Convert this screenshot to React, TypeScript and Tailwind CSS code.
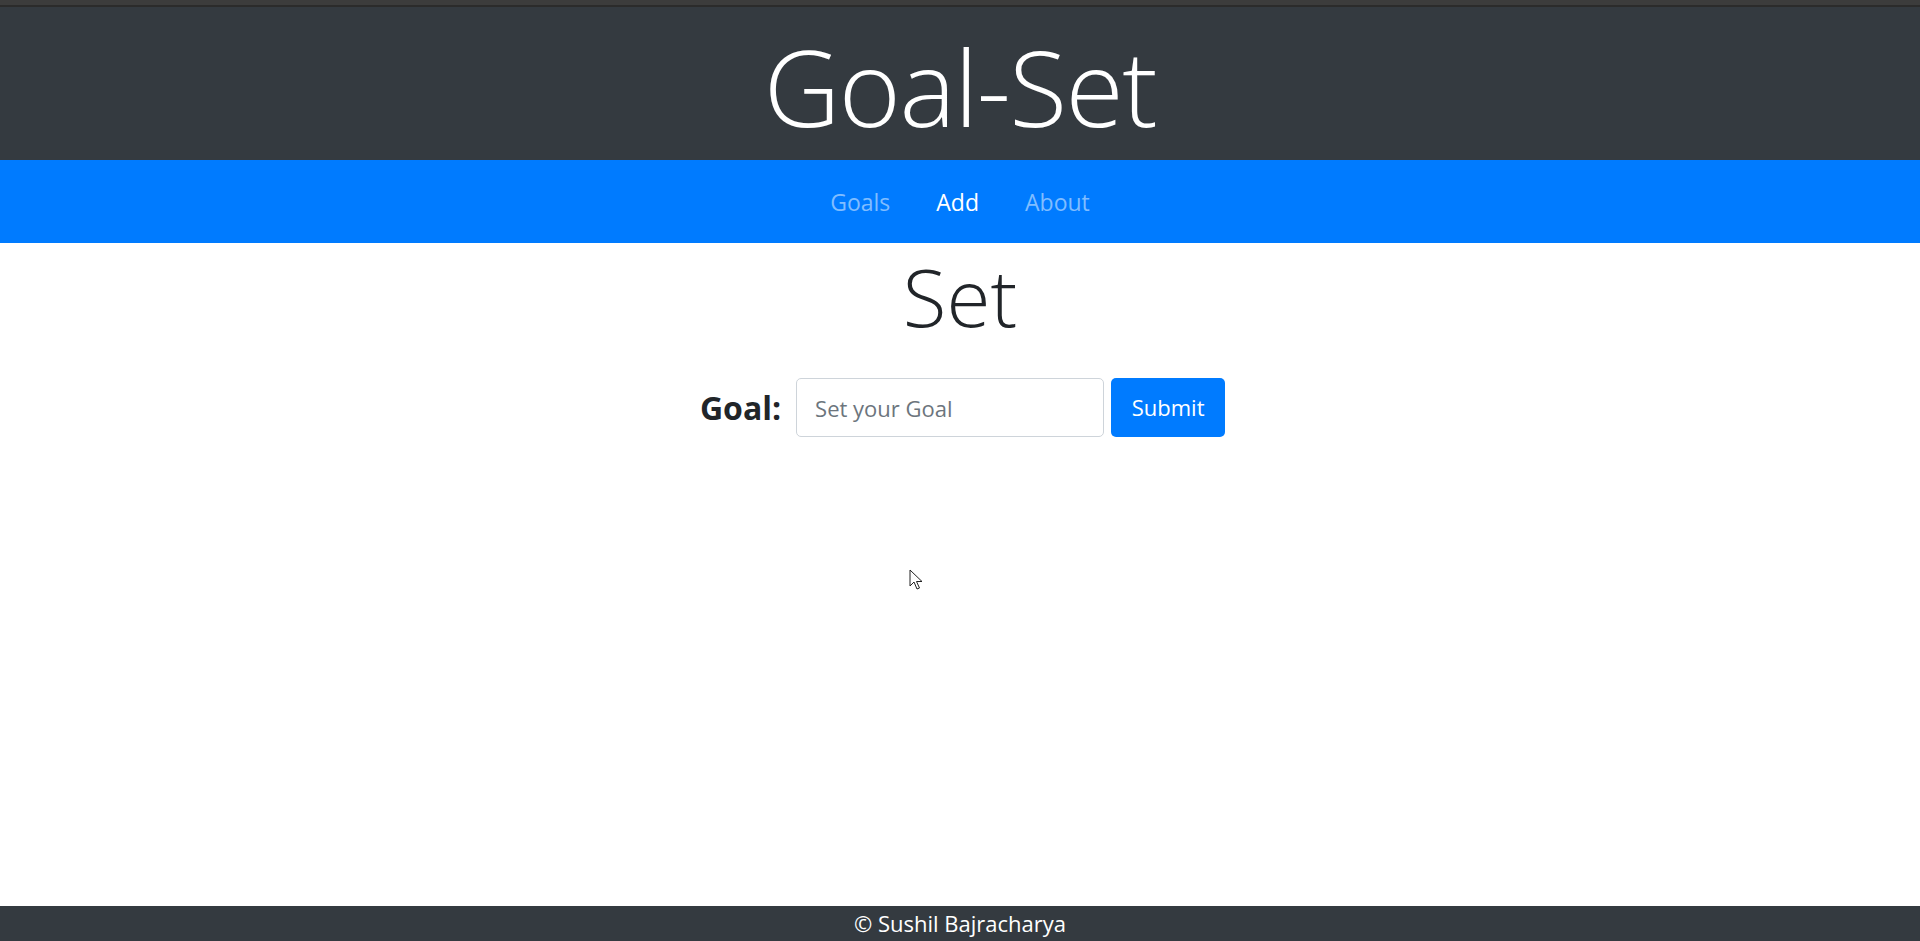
import React from "react";

const font = { fontFamily: '"Open Sans", "Noto Sans", "Liberation Sans", sans-serif' };

function Cursor() {
  return (
    <svg className="absolute left-[909px] top-[569px]" width="14" height="22" viewBox="0 0 14 22" aria-hidden>
      <path d="M1 1 L1 17 L5 13 L8 20 L10.5 19 L7.5 12.5 L13 12.5 Z" fill="#fff" stroke="#222" strokeWidth="1" strokeLinejoin="round" />
    </svg>
  );
}

export default function App() {
  return (
    <div className="relative flex min-h-[941px] flex-col bg-white text-[#212529]" style={font}>
      <div className="h-[5px] bg-[#3c3c3c]" />
      <div className="h-[2px] bg-[#2b2b2b]" />
      <header className="flex h-[153px] items-center justify-center bg-[#343a40] pt-[4px]">
        <h1 className="text-[106px] font-light leading-none tracking-[-1.5px] text-white">Goal-Set</h1>
      </header>
      <nav className="flex h-[83px] items-center justify-center bg-[#007bff]">
        <ul className="flex items-center pt-[2px] text-[23px]">
          <li className="px-[23px] text-[#80bdff]">Goals</li>
          <li className="px-[23px] text-white">Add</li>
          <li className="px-[23px] text-[#80bdff]">About</li>
        </ul>
      </nav>
      <main className="flex flex-col items-center">
        <h2 className="mt-[13px] text-[80px] font-light leading-none">Set</h2>
        <form className="mt-[42px] ml-[5px] flex items-center" onSubmit={(e) => e.preventDefault()}>
          <label className="mr-[15px] text-[32px] font-bold">Goal:</label>
          <input
            className="h-[59px] w-[308px] rounded-[5px] border border-[#ced4da] px-[18px] text-[22px] placeholder-[#6c757d] outline-none"
            placeholder="Set your Goal"
          />
          <button className="ml-[7px] h-[59px] w-[114px] rounded-[5px] bg-[#007bff] text-[22px] text-white">Submit</button>
        </form>
      </main>
      <footer className="mt-auto flex h-[35px] items-center justify-center bg-[#343a40] text-[22px] text-white">
        © Sushil Bajracharya
      </footer>
      <Cursor />
    </div>
  );
}
